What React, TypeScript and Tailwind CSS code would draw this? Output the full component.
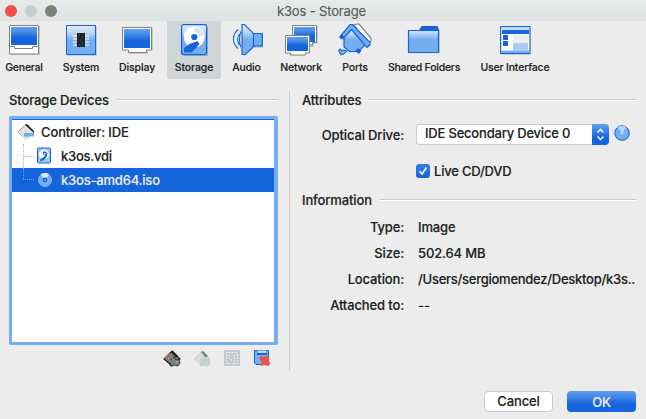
import type { ReactNode } from 'react';

const BLUE = '#1464dc';
const SKY = '#74aef0';

function Gradients() {
  return (
    <svg className="absolute h-0 w-0" aria-hidden="true">
      <defs>
        <linearGradient id="screen" x1="0" y1="0" x2="0" y2="1">
          <stop offset="0" stopColor="#5c9ded" />
          <stop offset="0.25" stopColor="#4b8ee8" />
          <stop offset="0.62" stopColor={BLUE} />
        </linearGradient>
        <linearGradient id="body" x1="0" y1="0" x2="0" y2="1">
          <stop offset="0" stopColor="#e4eefa" />
          <stop offset="0.26" stopColor="#bcd5f3" />
          <stop offset="0.5" stopColor={SKY} />
        </linearGradient>
      </defs>
    </svg>
  );
}

function Icon({ children }: { children: ReactNode }) {
  return (
    <svg width="34" height="34" viewBox="0 0 34 34" className="block shrink-0">
      {children}
    </svg>
  );
}

const GeneralIcon = () => (
  <Icon>
    <path d="M3 3h30v29H3z" fill="#c3cdd0" />
    <path d="M2.500 2.500h29v28.500h-29z" fill="#fff" stroke="#7b8379" />
    <path d="M4 4h26v18H4z" fill="url(#screen)" />
    <path d="M2.500 23.500h5v2h18v-2h6" fill="none" stroke="#7b8379" />
  </Icon>
);

const SystemIcon = () => (
  <Icon>
    <path d="M3 3h30v30H3z" fill="#c3cdd0" />
    <path d="M2.500 2.500h29v29h-29z" fill="url(#body)" stroke={BLUE} />
    <path d="M9 13h16M9 16h16M9 19h16M9 22h16" stroke="#fff" strokeWidth="1.2" />
    <path d="M13 10h8v14h-8z" fill="#202321" />
    <path d="M15 12h1m2 2h1m-3 3h1m1 3h1m-4 2h1" stroke="#626861" />
  </Icon>
);

const DisplayIcon = () => (
  <Icon>
    <path d="M3 5h30v22h-5v4H9v-4H3z" fill="#c3cdd0" />
    <path d="M2.500 4.500h29v22.500h-5v2.500h-18V27h-6z" fill="#fff" stroke="#7b8379" />
    <path d="M4 6h26v19H4z" fill="url(#screen)" />
  </Icon>
);

const StorageIcon = () => (
  <Icon>
    <path d="M7 4h24v29H7z" fill="#aab7bc" />
    <rect x="4.600" y="1.600" width="25" height="30" rx="2" fill="url(#body)" stroke={BLUE} strokeWidth="1.300" />
    <circle cx="17.300" cy="14" r="10.500" fill="#fff" />
    <path d="M17.500 4.500a9.500 9.500 0 0 1 9.300 8l-4.500.8a5 5 0 0 0-4.800-4.300z" fill="#d5e4f7" />
    <path d="m20.500 18-8 3-5.500 4v4.500h7.500l5-5 3-3.500z" fill={BLUE} />
    <circle cx="17.300" cy="14" r="3.100" fill={BLUE} />
  </Icon>
);

const AudioIcon = () => (
  <Icon>
    <path d="M13 3 24 12h9v13h-9l-11 8z" fill="#c3cdd0" />
    <path d="M12 1.500h2.500L24 11v12l-8.500 8.500H12z" fill="url(#body)" stroke={BLUE} strokeWidth="1.200" />
    <path d="M23.500 10.500h8.800v12.300h-8.800z" fill={SKY} stroke={BLUE} strokeWidth="1.200" />
    <path d="M11 8.500c-2 4-2 12 0 16M8 6.500c-6 5-6 14 0 19M9.500 11c-2.500 3-2.500 8 0 11" fill="none" stroke={BLUE} strokeWidth="1.100" />
  </Icon>
);

const NetworkIcon = () => (
  <Icon>
    <path d="M9 3h25v18h-4v3H15v-3H9z" fill="#c3cdd0" />
    <path d="M8.500 2.500h24v17h-4V22h-20z" fill="#fff" stroke="#7b8379" />
    <path d="M10 4h21v15H10z" fill="url(#screen)" />
    <path d="M1.500 12.500h24V30h-4v2h-15v-2h-5z" fill="#fff" stroke="#7b8379" />
    <path d="M3 14h21v14H3z" fill="url(#screen)" />
  </Icon>
);

const PortsIcon = () => (
  <Icon>
    <path d="m16 2 3-1h2l12 14v3l-3 2z" fill="#fff" stroke="#7b8379" strokeWidth="1.200" />
    <path d="m5.500 27-2 .500-1.500-1.500-1.300 1.300 2 4.300 3-.500 3-3z" fill={SKY} stroke={BLUE} strokeWidth="1.100" />
    <path d="M6 12 13 5l15 16-7.500 7.500h-9L6 24z" fill="url(#body)" stroke={BLUE} strokeWidth="1.200" />
    <path d="m3 12.500 9-11h2.500L32 19.500V22l-3 2.500L13.500 6.500 5 15.500z" fill={SKY} stroke={BLUE} strokeWidth="1.200" />
    <path d="m1 14 2.500-3 2.500 3-2.500 2.500zM17 28l3-3 3.500 2.500-2.500 3.500z" fill={BLUE} />
  </Icon>
);

const FolderIcon = () => (
  <Icon>
    <path d="M2 8h10l4-4h15l2 3v23H2z" fill="#c3cdd0" />
    <path d="M1.500 7.500h11l2.500-4h15l1.500 4v22h-30z" fill="url(#body)" stroke={BLUE} strokeWidth="1.200" />
    <path d="M12 8 15 3.500h15L31.500 8z" fill={BLUE} />
  </Icon>
);

const InterfaceIcon = () => (
  <Icon>
    <path d="M3 4h30v28H3z" fill="#c3cdd0" />
    <path d="M2.500 3.500h29.500v27h-29.500z" fill="#c7ddf6" stroke={BLUE} />
    <path d="M4 7h27v4H4z" fill={BLUE} />
    <path d="M4 11h27v16H4z" fill="#fff" />
    <path d="M5 12h5v5H5zm0 6h5v5H5z" fill={BLUE} />
    <path d="M15 12h15v8H15z" fill="#ececec" />
    <path d="M15 20h15v8H15z" fill="#a8cbf2" />
    <path d="M3 28h28v2H3z" fill={SKY} />
  </Icon>
);

function DriveIcon() {
  return (
    <svg width="16" height="18" viewBox="0 0 16 18" className="block">
      <rect x="1.500" y="1" width="13" height="15" rx="1" fill="#9cc5f3" stroke={BLUE} />
      <circle cx="8" cy="7.500" r="5" fill="#fff" />
      <path d="M7 4.500h3L11.500 7l-1 3L8 13l-4 1.500.500-2.500L8 10l1-2-2-.500z" fill={BLUE} />
      <path d="M8 6h1.500v1.500H8z" fill="#fff" />
    </svg>
  );
}

function Disc({ bordered = false }: { bordered?: boolean }) {
  return (
    <svg width="18" height="18" viewBox="0 0 18 18" className="block shrink-0">
      {bordered && <circle cx="9.500" cy="9.500" r="7.700" fill="#c3cdd0" />}
      <circle cx="9" cy="9" r={bordered ? 7.2 : 6.6} fill={SKY} stroke={bordered ? BLUE : SKY} />
      <path d="M9 9 4.500 3.200Q9 .8 13.500 3.200z" fill={bordered ? '#b5d3f5' : '#d9e7f8'} />
      <path d="m9 9 2-6" stroke="#d9e7f8" strokeWidth=".6" />
      <circle cx="9" cy="9" r={bordered ? 1.6 : 2.4} fill={bordered ? '#b5d3f5' : BLUE} />
      {!bordered && <circle cx="9" cy="9" r="1" fill={SKY} />}
    </svg>
  );
}

function CardIcon({ dark = false, faded = false }: { dark?: boolean; faded?: boolean }) {
  const edge = faded ? '#c3cdd0' : dark ? '#202321' : '#a5adaa';
  return (
    <svg width="18" height="18" viewBox="0 0 18 18" className="block shrink-0">
      <path d="m1 9 8-8 8 8-8 7z" fill={dark ? '#7b8379' : faded ? '#d3dadb' : '#dfe3e2'} stroke={edge} strokeWidth={dark ? 1.2 : .7} />
      <path d={dark || faded ? 'm8 2 2-1 5 5-2 2z' : 'm8 2 2-1 7 7v2z'} fill={faded ? '#7b8379' : '#202321'} />
      {!faded && <path d="m1.500 8.500 5-5" stroke="#e96a5f" strokeWidth={dark ? 1.5 : 1} />}
      {!dark && !faded && <path d="M7 10h10v3.500H7z" fill={SKY} />}
      {(dark || faded) && (
        <>
          <path d="m8 9 3-2 2 3 3-1 1 4-2 3-4-1-4 1z" fill={dark ? '#7b8379' : '#c3cdd0'} stroke={edge} strokeWidth=".8" />
          <path d="m8 7 3 3m-4 1 2 1m4 0 2 1M5 8l2 1" stroke={dark ? '#c3cdd0' : '#ececec'} strokeDasharray="1 1" />
        </>
      )}
    </svg>
  );
}

function FadedStorage() {
  return (
    <svg width="16" height="16" viewBox="0 0 16 16" className="block">
      <path d="M0 0h16v16H0z" fill="#c3cdd0" />
      <path d="M2 2.500h12M2.500 4v7M13.500 4v7M4 5.500h3m2 0h3M5.500 7v3m2-1v2m3-4v4M3 13.500h2m4 0h4" fill="none" stroke="#ececec" strokeDasharray="2 1" />
    </svg>
  );
}

function RemoveStorage() {
  return (
    <svg width="17" height="17" viewBox="0 0 17 17" className="block">
      <path d="M.5.500h14v14H2L.5 13z" fill={SKY} stroke={BLUE} />
      <path d="M3 0h10v5H3z" fill={BLUE} />
      <path d="M3.500 .500h9v2.500h-9z" fill="#c3d8f2" />
      <path d="m6 6 4 1 3-1 2.500 2-1 3 2 2-2 3-4-1-4 1 1-4-2-3z" fill="#f0504b" />
      <path d="m9 12 2-1 2 2" fill="none" stroke="#dc453f" />
    </svg>
  );
}

const TOOLS = [
  { label: 'General', icon: <GeneralIcon />, cell: 'w-12', text: 'tracking-[-0.22px]' },
  { label: 'System', icon: <SystemIcon />, cell: 'w-[66px]', text: 'tracking-[-0.16px]' },
  { label: 'Display', icon: <DisplayIcon />, cell: 'w-[46px] mr-[7px]', text: 'tracking-[-0.1px]' },
  { label: 'Storage', icon: <StorageIcon />, cell: 'w-[54px] bg-[#cfd5d7] rounded-b-xs', text: 'tracking-[-0.12px]' },
  { label: 'Audio', icon: <AudioIcon />, cell: 'w-[51px]', text: 'tracking-[-0.1px]' },
  { label: 'Network', icon: <NetworkIcon />, cell: 'w-[58px]', text: 'tracking-[-0.16px]' },
  { label: 'Ports', icon: <PortsIcon />, cell: 'w-[50px]', text: 'tracking-[-0.2px]' },
  { label: 'Shared Folders', icon: <FolderIcon />, cell: 'w-[88px]', text: 'tracking-[-0.24px]' },
  { label: 'User Interface', icon: <InterfaceIcon />, cell: 'w-[94px]', text: 'tracking-[-0.18px]' },
];

function SectionTitle({ children, gap }: { children: ReactNode; gap: string }) {
  return (
    <div className={`flex h-4 items-center ${gap}`}>
      <h2 className="whitespace-nowrap">{children}</h2>
      <div className="h-0.5 flex-1 border-t border-[#c3cdd0] bg-white" />
    </div>
  );
}

function InfoRow({ label, children, text = '' }: { label: string; children: ReactNode; text?: string }) {
  return (
    <div className="flex h-[26px] items-center">
      <dt className="w-[102px] shrink-0 text-right">{label}</dt>
      <dd className={`ml-[14px] whitespace-nowrap ${text}`}>{children}</dd>
    </div>
  );
}

export default function App() {
  return (
    <div className="h-[419px] w-[646px] overflow-hidden bg-[#ececec] font-['Inter','Liberation_Sans',sans-serif] text-[13px] leading-4 font-medium tracking-[-0.13px] text-[#202321] [-webkit-text-stroke:0.15px]">
      <Gradients />
      <header className="flex h-[21px] items-center bg-linear-to-b from-[#e9ebeb] to-[#dde1e1]">
        <div className="flex w-[58px] gap-[8px] pl-[5px]">
          <i className="size-3 rounded-full bg-[#f0504b]" />
          <i className="size-3 rounded-full bg-[#c3cdd0]" />
          <i className="size-3 rounded-full bg-[#7b8379]" />
        </div>
        <h1 className="ml-[219px] font-normal tracking-[-0.16px] text-[#555b55]">k3os - Storage</h1>
      </header>

      <nav className="flex h-[58px]">
        {TOOLS.map((tool) => (
          <div key={tool.label} className={`flex shrink-0 flex-col items-center pt-0.5 ${tool.cell}`}>
            {tool.icon}
            <span className={`mt-[3px] whitespace-nowrap text-[10.500px] ${tool.text}`}>{tool.label}</span>
          </div>
        ))}
      </nav>

      <main className="flex h-[292px] pt-3">
        <section className="w-[289px] pl-[9px]">
          <div className="mt-px w-[269px]">
            <SectionTitle gap="gap-2">Storage Devices</SectionTitle>
            <div className="mt-2 h-[229px] rounded-xs border-[3px] border-r-4 border-[#74aef0] bg-white">
              <div className="border-t border-[#1464dc]">
                <div className="flex h-6 items-center pl-[5px]">
                  <CardIcon />
                  <span className="ml-[6px]">Controller: IDE</span>
                </div>
                <div className="flex h-6 items-center">
                  <div className="ml-[11px] h-6 w-[11px] border-l border-dotted border-[#aeb8bb]">
                    <div className="mt-3 border-t border-dotted border-[#aeb8bb]" />
                  </div>
                  <div className="ml-0.5"><DriveIcon /></div>
                  <span className="ml-[9px] tracking-[-0.25px]">k3os.vdi</span>
                </div>
                <div className="flex h-6 items-center bg-[#1464dc] text-[#ececec]">
                  <div className="mb-3 ml-[11px] h-3 w-[11px] border-b border-l border-dotted border-[#74aef0]" />
                  <div className="ml-0.5"><Disc /></div>
                  <span className="ml-[7px] tracking-[-0.2px]">k3os-amd64.iso</span>
                </div>
              </div>
            </div>
            <div className="mt-[5px] flex gap-[14px] pl-[155px]">
              <div className="-ml-px w-[17px]"><CardIcon dark /></div>
              <div className="-ml-px w-[17px]"><CardIcon faded /></div>
              <FadedStorage />
              <RemoveStorage />
            </div>
          </div>
        </section>

        <section className="h-[280px] w-[347px] border-l border-[#c3cdd0] pl-3">
          <div className="mt-px">
            <SectionTitle gap="gap-2">Attributes</SectionTitle>
          </div>
          <div className="mt-4 flex h-[21px] items-center">
            <label className="w-[102px] text-right">Optical Drive:</label>
            <div className="ml-3 flex h-[21px] w-[193px] items-center rounded-[4px] border border-r-0 border-[#c3cdd0] bg-white pl-2">
              <span className="whitespace-nowrap pb-1 tracking-[-0.2px]">IDE Secondary Device 0</span>
              <div className="-my-px ml-auto flex h-[21px] w-[17px] items-center justify-center rounded-r-[4px] bg-linear-to-b from-[#5f9fec] to-[#1464dc] to-65%">
                <svg width="9" height="13" viewBox="0 0 9 13">
                  <path d="M1.500 4.500 4.500 1.500l3 3M1.500 8.500l3 3 3-3" fill="none" stroke="#ececec" strokeWidth="1.700" />
                </svg>
              </div>
            </div>
            <div className="mb-[3px] ml-1"><Disc bordered /></div>
          </div>
          <div className="mt-[18px] ml-[114px] flex h-4 items-center">
            <div className="flex size-[14px] items-center justify-center rounded-[3px] bg-linear-to-b from-[#347de3] to-[#1464dc]">
              <svg width="10" height="10" viewBox="0 0 10 10">
                <path d="m1.500 5 2.500 3 4.500-6.500" fill="none" stroke="#fff" strokeWidth="1.600" />
              </svg>
            </div>
            <span className="ml-1 tracking-[-0.2px]">Live CD/DVD</span>
          </div>
          <div className="mt-[13px]">
            <SectionTitle gap="gap-2">Information</SectionTitle>
          </div>
          <dl className="mt-[6px]">
            <InfoRow label="Type:">Image</InfoRow>
            <InfoRow label="Size:">502.64 MB</InfoRow>
            <InfoRow label="Location:" text="tracking-[-0.26px]">/Users/sergiomendez/Desktop/k3s..</InfoRow>
            <InfoRow label="Attached to:">--</InfoRow>
          </dl>
        </section>
      </main>

      <footer className="mt-5 flex justify-end gap-[14px] pr-[10px]">
        <button className="h-[21px] w-[69px] rounded-[4px] border border-[#c3cdd0] bg-white leading-[19px]">Cancel</button>
        <button className="h-[21px] w-[69px] rounded-[4px] bg-linear-to-b from-[#5f9fec] to-[#1464dc] to-65% text-[#ececec]">OK</button>
      </footer>
    </div>
  );
}
